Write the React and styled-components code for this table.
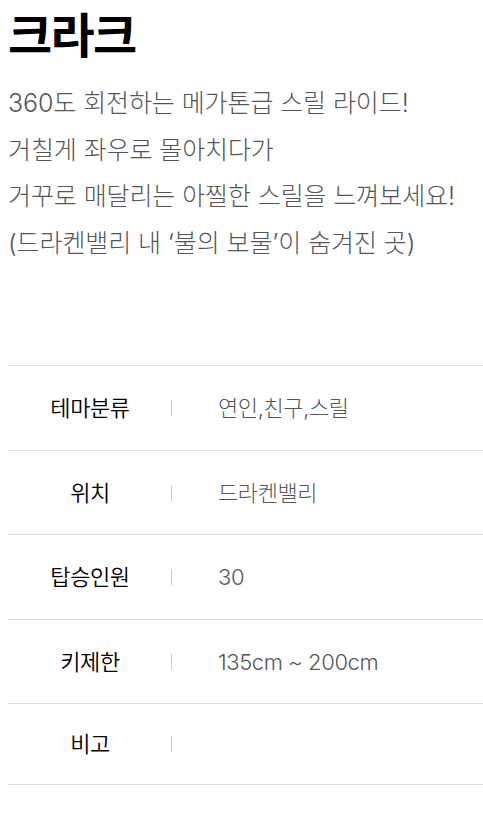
import React from 'react';
import styled, { createGlobalStyle } from 'styled-components';

const GlobalStyle = createGlobalStyle`
  body {
    margin: 0;
    background: #ffffff;
    font-family: "Inter", "Noto Sans CJK KR", sans-serif;
  }
`;

const Page = styled.div`
  padding: 0 0 0 8px;
`;

const Title = styled.h1`
  margin: 0;
  padding-top: 6px;
  font-size: 48px;
  line-height: 60px;
  font-weight: 700;
  letter-spacing: -1.6px;
  color: #000;
`;

const Desc = styled.p`
  margin: 14px 0 0;
  font-size: 25px;
  line-height: 46.5px;
  font-weight: 300;
  letter-spacing: -0.1px;
  color: #555;
`;

const Table = styled.div`
  margin-top: 99px;
  border-top: 1px solid #dddddd;
`;

const Row = styled.div`
  display: grid;
  grid-template-columns: 164px 1fr;
  align-items: center;
  padding: 30px 0 29.6px;
  border-bottom: 1px solid #dddddd;
`;

const Label = styled.div`
  position: relative;
  text-align: center;
  font-size: 22px;
  line-height: 20px;
  font-weight: 350;
  letter-spacing: -0.4px;
  color: #000;
  &::after {
    content: '';
    position: absolute;
    right: 0;
    top: 2px;
    width: 1px;
    height: 16px;
    background: #cccccc;
  }
`;

const Value = styled.div`
  padding-left: 46px;
  font-size: 22px;
  line-height: ${(p) => (p.empty ? '20px' : '24px')};
  font-weight: 300;
  letter-spacing: -0.4px;
  color: #555;
`;

const rows = [
  ['테마분류', '연인,친구,스릴'],
  ['위치', '드라켄밸리'],
  ['탑승인원', '30'],
  ['키제한', '135cm ~ 200cm'],
  ['비고', ''],
];

export default function App() {
  return (
    <Page>
      <GlobalStyle />
      <Title>크라크</Title>
      <Desc>
        360도 회전하는 메가톤급 스릴 라이드!
        <br />
        거칠게 좌우로 몰아치다가
        <br />
        거꾸로 매달리는 아찔한 스릴을 느껴보세요!
        <br />
        (드라켄밸리 내 ‘불의 보물’이 숨겨진 곳)
      </Desc>
      <Table>
        {rows.map(([k, v]) => (
          <Row key={k}>
            <Label>{k}</Label>
            <Value empty={!v}>{v}</Value>
          </Row>
        ))}
      </Table>
    </Page>
  );
}
